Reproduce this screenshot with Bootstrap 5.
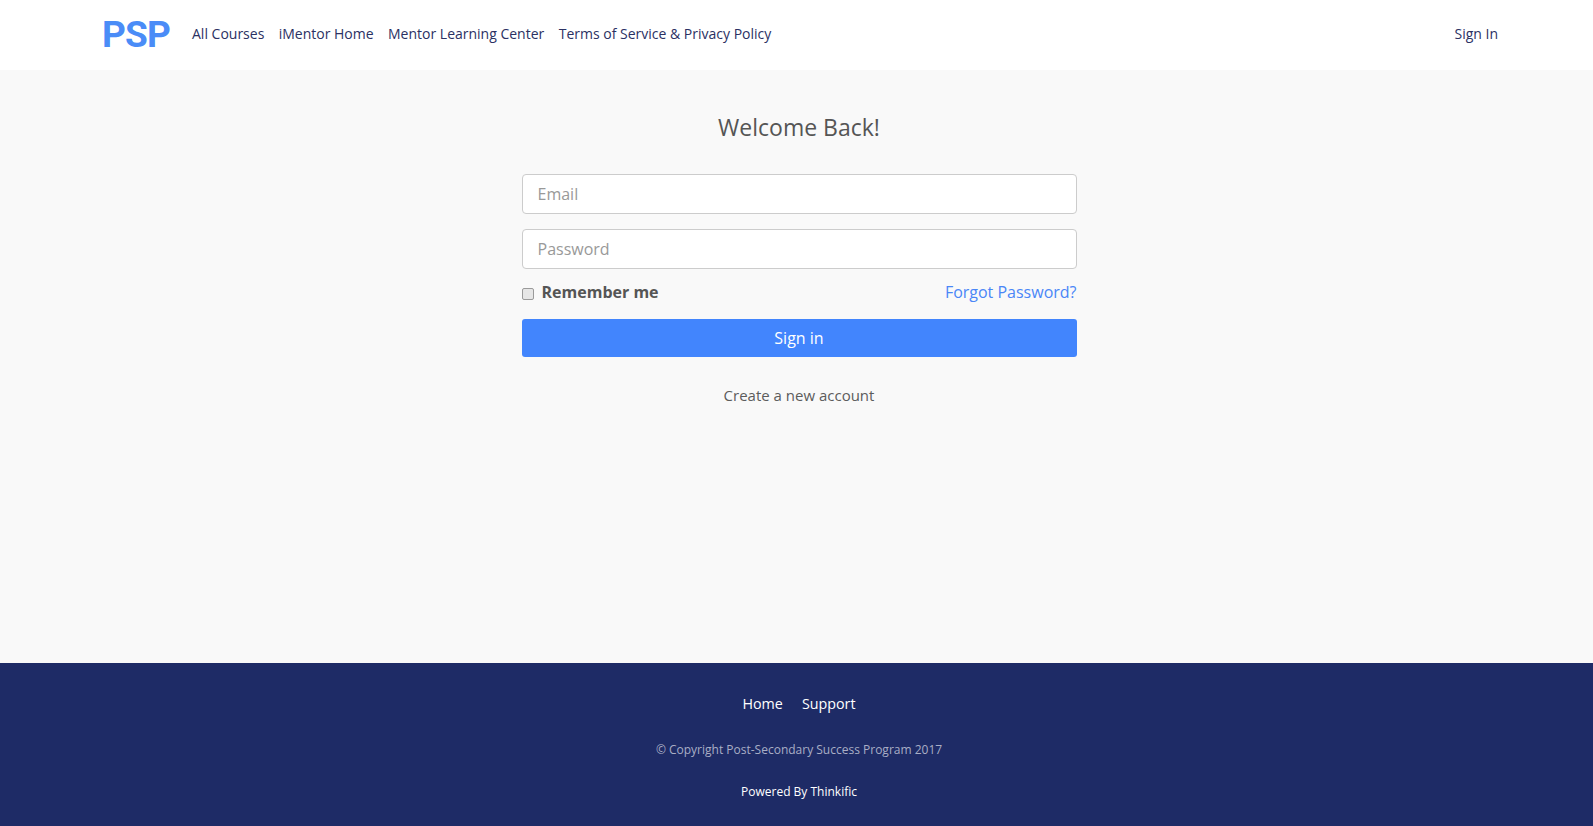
<!DOCTYPE html>
<html lang="en">
<head>
<meta charset="utf-8">
<title>Sign In</title>
<link href="https://cdn.jsdelivr.net/npm/bootstrap@5.3.0/dist/css/bootstrap.min.css" rel="stylesheet">
<style>
html,body{height:100%}
body{font-family:"Open Sans",sans-serif;background:#f9f9f9;color:#555;font-size:16px}
.site-wrap{min-height:826px}
.top-bar{height:70px;background:#fff;padding:0 95px 2px 102px}
.psp-logo{font-family:Roboto,sans-serif;font-weight:700;font-size:37px;line-height:1;letter-spacing:-.8px;color:#4a8cf7;text-decoration:none;width:90px}
.top-link{font-size:14px;color:#2b3163;text-decoration:none;line-height:20px}
.top-links{gap:14.4px}
.main-area{flex:1 1 auto;padding-left:5px}
.signin-box{width:555px;margin:0 auto;padding-top:42px}
.signin-title{font-size:23px;font-weight:400;line-height:30px;color:#555;text-align:center;margin:0 0 32px}
.signin-input{height:40px;border:1px solid #ccc;border-radius:4px;padding:0 15px;font-size:16px;margin-bottom:15px;color:#555;box-shadow:none}
.signin-input::placeholder{color:#999}
.check-row{height:33px;margin-top:-3px;margin-bottom:5px;line-height:22px}
.check-box{appearance:none;width:12px;height:12px;margin:7px 7px 0 0;background:#e6e6e6;border:1px solid #9a9a9a;border-radius:2px}
.check-label{font-weight:700;color:#555;margin:0 0 0 1px}
.forgot{color:#4a86f7;text-decoration:none}
.signin-btn{height:38px;background:#4285fd;border:0;border-radius:3px;color:#fff;font-size:16px;padding:0}
.new-account{display:block;text-align:center;font-size:15px;color:#5c5c5c;text-decoration:none;margin-top:27px;line-height:22px}
.site-foot{height:163px;background:#1e2b66;text-align:center;padding:31px 0 0 5px}
.foot-links{gap:19px;line-height:20px}
.foot-link{color:#fff;font-size:14.3px;text-decoration:none}
.foot-copy{font-size:12px;color:#a9aec5;margin:27px 0 0;line-height:18px}
.foot-power{display:block;font-size:12px;font-weight:500;color:#fff;text-decoration:none;margin-top:24px;line-height:18px}
</style>
</head>
<body>
<div class="site-wrap d-flex flex-column">
  <header class="top-bar d-flex align-items-center">
    <a class="psp-logo" href="#">PSP</a>
    <nav class="top-links d-flex flex-grow-1">
      <a class="top-link" href="#">All Courses</a>
      <a class="top-link" href="#">iMentor Home</a>
      <a class="top-link" href="#">Mentor Learning Center</a>
      <a class="top-link" href="#">Terms of Service &amp; Privacy Policy</a>
    </nav>
    <a class="top-link" href="#">Sign In</a>
  </header>
  <main class="main-area">
    <div class="signin-box">
      <h1 class="signin-title">Welcome Back!</h1>
      <form>
        <input class="form-control signin-input" type="email" placeholder="Email">
        <input class="form-control signin-input" type="password" placeholder="Password">
        <div class="check-row d-flex justify-content-between">
          <div class="d-flex align-items-start">
            <input class="check-box" type="checkbox" id="rem">
            <label class="check-label" for="rem">Remember me</label>
          </div>
          <a class="forgot" href="#">Forgot Password?</a>
        </div>
        <button class="btn signin-btn w-100" type="button">Sign in</button>
      </form>
      <a class="new-account" href="#">Create a new account</a>
    </div>
  </main>
  <footer class="site-foot">
    <div class="foot-links d-flex justify-content-center">
      <a class="foot-link" href="#">Home</a>
      <a class="foot-link" href="#">Support</a>
    </div>
    <p class="foot-copy">© Copyright Post-Secondary Success Program 2017</p>
    <a class="foot-power" href="#">Powered By Thinkific</a>
  </footer>
</div>
<script src="https://cdn.jsdelivr.net/npm/bootstrap@5.3.0/dist/js/bootstrap.bundle.min.js"></script>
</body>
</html>
